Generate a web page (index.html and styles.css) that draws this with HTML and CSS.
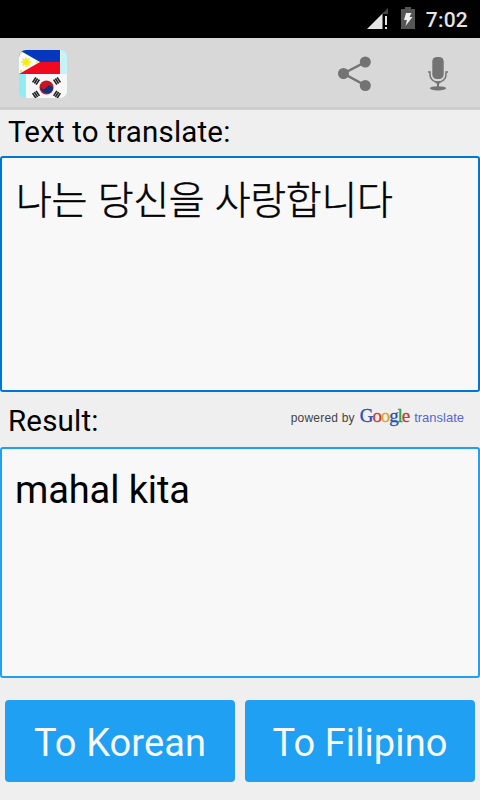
FILE: index.html
```html
<!DOCTYPE html>
<html lang="en">
<head>
<meta charset="utf-8">
<title>Korean Filipino Translator</title>
<link rel="stylesheet" href="styles.css">
</head>
<body>
<div class="status">
  <svg class="signal" width="22" height="22" viewBox="0 0 22 22">
    <path fill="#444" d="M21 0V6H15z"/>
    <path fill="#e4e4e4" d="M0 21 15.500 5.500V21zM18 8h2v9h-2zM18 19h2v2h-2z"/>
  </svg>
  <svg class="battery" width="14" height="22" viewBox="0 0 14 22">
    <path fill="#555" d="M4 0h6v2h4v20H0V2h4z"/>
    <path fill="#f0f0f0" d="M5 6h5.500L8.500 10H11.500L4.500 19 6 13H3z"/>
  </svg>
  <span class="clock">7:02</span>
</div>
<header class="appbar">
  <svg class="logo" width="48" height="48" viewBox="0 0 48 48">
    <defs>
      <clipPath id="round"><rect width="48" height="48" rx="7"/></clipPath>
      <linearGradient id="sky" x1="0" y1="0" x2="1" y2="0"><stop offset="0" stop-color="#8cecf2"/><stop offset="1" stop-color="#c5f5f7"/></linearGradient>
      <g id="bars"><path d="M-3-2.100H3M-3 0H3M-3 2.100H3" stroke="#222" stroke-width="1.600"/></g>
    </defs>
    <g clip-path="url(#round)">
      <rect width="48" height="48" fill="url(#sky)"/>
      <rect width="41" height="12" fill="#0638bd"/>
      <rect y="12" width="41" height="12" fill="#ef0a20"/>
      <path d="M41 0h1v24h-1z" fill="#edf7f7"/>
      <path d="M0 0 21 12 0 24z" fill="#f8faf8"/>
      <g stroke="#f3ed12" stroke-width="1.300"><path d="M7 7v10M2 12h10M3.500 8.500l7 7M10.500 8.500l-7 7"/></g>
      <circle cx="7" cy="12" r="3" fill="#f3ed12"/>
      <path d="M1 2h2v2H1zM1 20h2v2H1zM17 11h2v2h-2z" fill="#f3ed52"/>
      <rect x="7" y="24" width="41" height="24" fill="#f7f7f7"/>
      <circle cx="27.500" cy="37.500" r="7" fill="#c81424"/>
      <path d="M21.500 34a3.500 3.500 0 0 0 6 3.500 3.500 3.500 0 0 1 6.500 2.500A7 7 0 0 1 21.500 34z" fill="#08377d"/>
      <use href="#bars" transform="translate(17 31) rotate(-57)"/>
      <use href="#bars" transform="translate(38 31) rotate(57)"/>
      <use href="#bars" transform="translate(17 44.500) rotate(57)"/>
      <use href="#bars" transform="translate(38 44.500) rotate(-57)"/>
    </g>
  </svg>
  <svg class="share" width="34" height="36" viewBox="0 0 34 36" fill="#737373">
    <path d="M27.500 6 5.500 17.500 27.500 29.500" fill="none" stroke="#737373" stroke-width="2.500"/>
    <circle cx="5.500" cy="17.500" r="5.500"/><circle cx="27.300" cy="6" r="5.500"/><circle cx="27.300" cy="29.500" r="5.500"/>
  </svg>
  <svg class="mic" width="20" height="34" viewBox="0 0 20 34" fill="#737373">
    <rect x="4.300" y="0" width="11.400" height="22" rx="4.500"/>
    <path d="M0 15H2V18a8 7 0 0 0 16 0V15H20" fill="none" stroke="#737373" stroke-width="1.500"/>
    <path d="M6.500 24.500h7L11 27v3H9v-3z"/><ellipse cx="10" cy="31.300" rx="8.200" ry="2.100"/>
  </svg>
</header>
<main>
  <div class="label first">Text to translate:</div>
  <div class="box source"><span class="korean" lang="ko">나는 당신을 사랑합니다</span></div>
  <div class="label second">
    <span>Result:</span>
    <div class="credit"><span class="powered">powered by</span><span class="google"><i class="b">G</i><i class="r">o</i><i class="y">o</i><i class="b">g</i><i class="g">l</i><i class="r">e</i></span><span class="translate">translate</span></div>
  </div>
  <div class="box result">mahal kita</div>
  <div class="buttons"><button>To Korean</button><button>To Filipino</button></div>
</main>
</body>
</html>
```

FILE: styles.css
```css
* { box-sizing: border-box; }
body { margin: 0; width: 480px; height: 800px; overflow: hidden; background: #efefef; color: #000; font-family: Roboto, "Noto Sans CJK KR", sans-serif; }
.status { height: 38px; background: #000; display: flex; align-items: flex-start; justify-content: flex-end; padding: 7px 12px 0 0; }
.signal { margin: 1px 12px 0 0; }
.battery { margin-right: 11px; }
.clock { color: #e4e4e4; font-size: 21px; font-weight: 500; line-height: 26px; letter-spacing: 0.2px; }
.appbar { height: 72px; background: #d8d8d8; border-bottom: 3px solid #cecece; display: flex; align-items: flex-start; padding: 12px 32px 0 19px; }
.share { margin: 6px 56px 0 auto; }
.mic { margin-top: 7px; }
.label { font-size: 29.5px; line-height: 36px; letter-spacing: 0.18px; white-space: nowrap; }
.first { height: 46px; padding: 4px 8px 0; }
.second { height: 55px; padding: 11px 16px 0 8px; display: flex; justify-content: space-between; }
.box { background: #f8f8f8; border: 2px solid #20a0f2; border-radius: 3px; padding: 18px 13px; font-size: 38px; line-height: 46px; letter-spacing: -0.1px; white-space: nowrap; }
.source { height: 236px; padding: 16px 14px; border-color: #0077d2; }
.result { height: 231px; }
.korean { font-family: "Noto Sans CJK KR", sans-serif; font-weight: 300; font-size: 39px; letter-spacing: -0.35px; -webkit-text-stroke: 0.5px #000; }
.credit { display: flex; align-items: baseline; height: 24px; margin-top: 1px; line-height: 24px; letter-spacing: 0; font-family: "Liberation Sans", sans-serif; font-size: 12px; color: #444; }
.powered { margin-right: 5px; letter-spacing: 0.2px; }
.google { font-family: "Liberation Serif", serif; font-size: 19px; letter-spacing: -1.1px; margin-right: 5px; -webkit-text-stroke: 0.3px; }
.google i { font-style: normal; }
.b { color: #2850b8; } .r { color: #c83c30; } .y { color: #d8a818; } .g { color: #30a038; }
.translate { color: #5568d8; font-size: 13px; }
.buttons { display: flex; gap: 10px; padding: 22px 5px 0; }
button { flex: 1; height: 82px; padding: 4px 0 0; border: 0; border-radius: 4px; background: #20a0f2; color: #f8f8f8; font: 38px/46px Roboto, sans-serif; letter-spacing: 0.1px; white-space: nowrap; }
```
